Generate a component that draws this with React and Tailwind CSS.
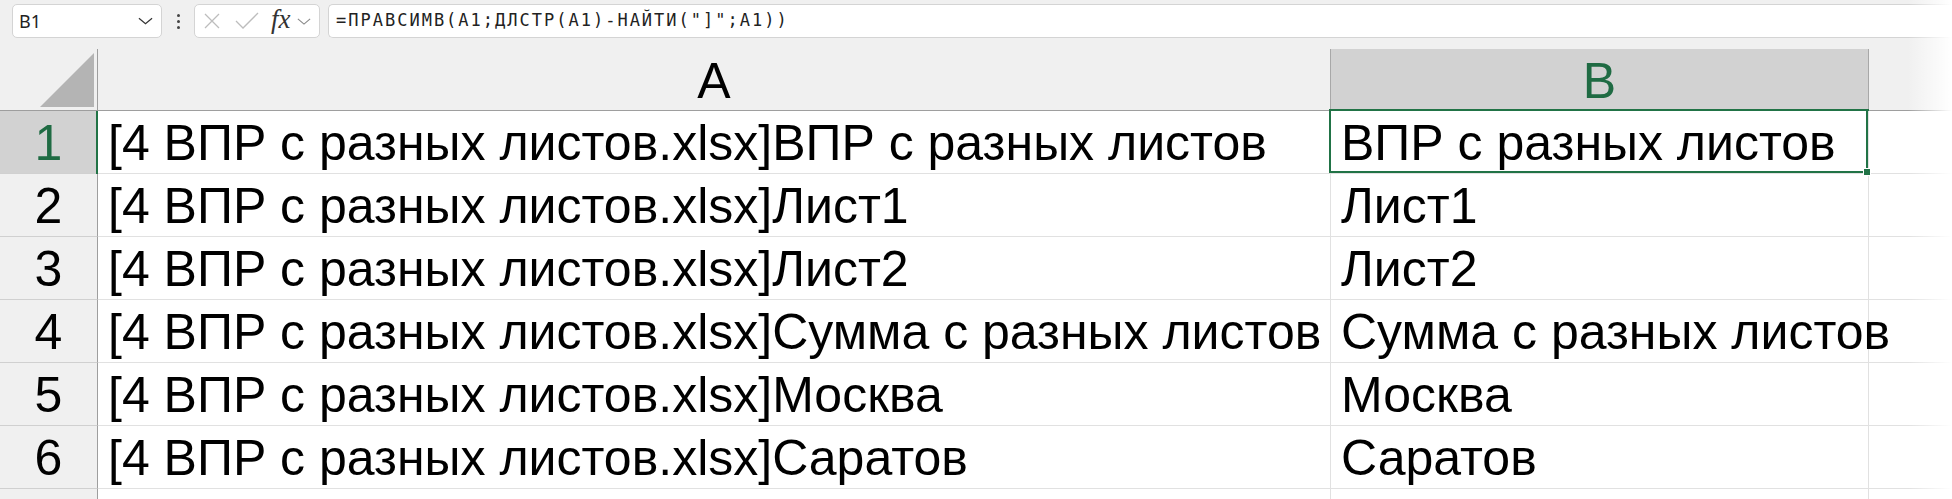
import React from "react";

const rows = [
  ["[4 ВПР с разных листов.xlsx]ВПР с разных листов", "ВПР с разных листов"],
  ["[4 ВПР с разных листов.xlsx]Лист1", "Лист1"],
  ["[4 ВПР с разных листов.xlsx]Лист2", "Лист2"],
  ["[4 ВПР с разных листов.xlsx]Сумма с разных листов", "Сумма с разных листов"],
  ["[4 ВПР с разных листов.xlsx]Москва", "Москва"],
  ["[4 ВПР с разных листов.xlsx]Саратов", "Саратов"],
];

const cellFont = { fontFamily: '"Liberation Sans", Arial, sans-serif' };

function Chevron({ className, color = "#444" }) {
  return (
    <svg className={className} viewBox="0 0 16 8" fill="none">
      <path d="M1 1 L8 7 L15 1" stroke={color} strokeWidth="1.3" />
    </svg>
  );
}

export default function App() {
  return (
    <div
      className="relative w-[1952px] h-[499px] overflow-hidden bg-[#f0f0f0] text-black"
      style={cellFont}
    >
      {/* Formula bar */}
      <div className="h-[49px] flex items-start pt-[4px] pl-[12px]">
        <div className="w-[150px] h-[34px] rounded-[5px] border border-[#d4d4d4] bg-white flex items-center justify-between pl-[6px] pr-[8px]">
          <span className="text-[18px] text-[#222]" style={{ fontFamily: '"Noto Sans", sans-serif' }}>B1</span>
          <Chevron className="w-[15px] h-[8px]" color="#333" />
        </div>
        <div className="w-[32px] h-[34px] flex flex-col items-center justify-center gap-[3px]">
          <div className="w-[3px] h-[3px] rounded-full bg-[#444]" />
          <div className="w-[3px] h-[3px] rounded-full bg-[#444]" />
          <div className="w-[3px] h-[3px] rounded-full bg-[#444]" />
        </div>
        <div className="w-[126px] h-[34px] rounded-[5px] border border-[#d4d4d4] bg-white flex items-center pl-[8px]">
          <svg className="w-[18px] h-[18px]" viewBox="0 0 18 18" fill="none">
            <path d="M2 2 L16 16 M16 2 L2 16" stroke="#bdbdbd" strokeWidth="1.3" />
          </svg>
          <svg className="ml-[14px] w-[24px] h-[18px]" viewBox="0 0 24 18" fill="none">
            <path d="M1 9 L8 16 L23 1" stroke="#bdbdbd" strokeWidth="1.3" />
          </svg>
          <span
            className="ml-[12px] text-[27px] italic leading-none text-[#333] pb-[3px]"
            style={{ fontFamily: '"Liberation Serif", serif' }}
          >
            fx
          </span>
          <Chevron className="ml-[6px] w-[14px] h-[7px]" color="#888" />
        </div>
        <div className="ml-[8px] flex-1 h-[34px] rounded-l-[5px] border border-r-0 border-[#d4d4d4] bg-white flex items-center pl-[7px]">
          <span
            className="text-[17px] tracking-[2px] text-[#222]"
            style={{ fontFamily: '"DejaVu Sans Mono", monospace' }}
          >
            =ПРАВСИМВ(A1;ДЛСТР(A1)-НАЙТИ("]";A1))
          </span>
        </div>
      </div>

      {/* Column headers */}
      <div className="flex h-[62px] border-b border-[#9e9e9e]">
        <div className="w-[98px] shrink-0 border-r border-[#9e9e9e] relative">
          <svg className="absolute left-0 top-0 w-[97px] h-[61px]" viewBox="0 0 97 61">
            <polygon points="40,58 94,4 94,58" fill="#b4b4b4" />
          </svg>
        </div>
        <div className="w-[1233px] shrink-0 border-r border-[#a8a8a8] flex items-end justify-center pb-[1px]">
          <span className="text-[50px] leading-[56px]">A</span>
        </div>
        <div className="relative w-[538px] shrink-0 bg-[#d2d2d2] border-r border-[#a8a8a8] flex items-end justify-center pb-[1px]">
          <span className="text-[50px] leading-[56px] text-[#1f6b43]">B</span>
          <div className="absolute left-[-1px] right-[-1px] bottom-[-1px] h-[2px] bg-[#217346]" />
        </div>
        <div className="flex-1" />
      </div>

      {/* Rows */}
      {rows.map(([a, b], i) => {
        const sel = i === 0;
        return (
          <div key={i} className="flex h-[63px] bg-white">
            <div
              className={
                sel
                  ? "relative w-[98px] shrink-0 bg-[#d2d2d2] border-r border-b border-r-[#9e9e9e] border-b-[#d0d0d0] flex items-end justify-center pb-[2px]"
                  : "w-[98px] shrink-0 bg-[#f0f0f0] border-r border-b border-r-[#9e9e9e] border-b-[#d0d0d0] flex items-end justify-center pb-[2px]"
              }
            >
              <span className={sel ? "text-[50px] leading-[56px] text-[#1f6b43]" : "text-[50px] leading-[56px]"}>
                {i + 1}
              </span>
              {sel && <div className="absolute right-[-1px] top-0 bottom-[-1px] w-[2px] bg-[#217346]" />}
            </div>
            <div className="w-[1233px] shrink-0 border-r border-b border-[#e1e1e1] flex items-end pl-[10px] pb-[2px] whitespace-nowrap">
              <span className="text-[50px] leading-[56px]">{a}</span>
            </div>
            <div className="relative w-[538px] shrink-0 border-r border-b border-[#e1e1e1] flex items-end pl-[10px] pb-[2px] whitespace-nowrap">
              <span className="text-[50px] leading-[56px]">{b}</span>
              {sel && (
                <div className="absolute left-[-2px] top-[-2px] right-0 bottom-0 border-2 border-[#217346] z-10">
                  <div className="absolute right-[-5px] bottom-[-5px] w-[8px] h-[8px] bg-[#217346] border border-white" />
                </div>
              )}
            </div>
            <div className="flex-1 border-b border-[#e1e1e1]" />
          </div>
        );
      })}
      <div className="flex h-[20px] bg-white">
        <div className="w-[98px] shrink-0 bg-[#f0f0f0] border-r border-[#9e9e9e]" />
        <div className="w-[1233px] shrink-0 border-r border-[#e1e1e1]" />
        <div className="w-[538px] shrink-0 border-r border-[#e1e1e1]" />
      </div>

      {/* right fade */}
      <div className="absolute right-0 top-0 h-full w-[44px] bg-linear-to-r from-[#ffffff00] to-white z-20" />
    </div>
  );
}
